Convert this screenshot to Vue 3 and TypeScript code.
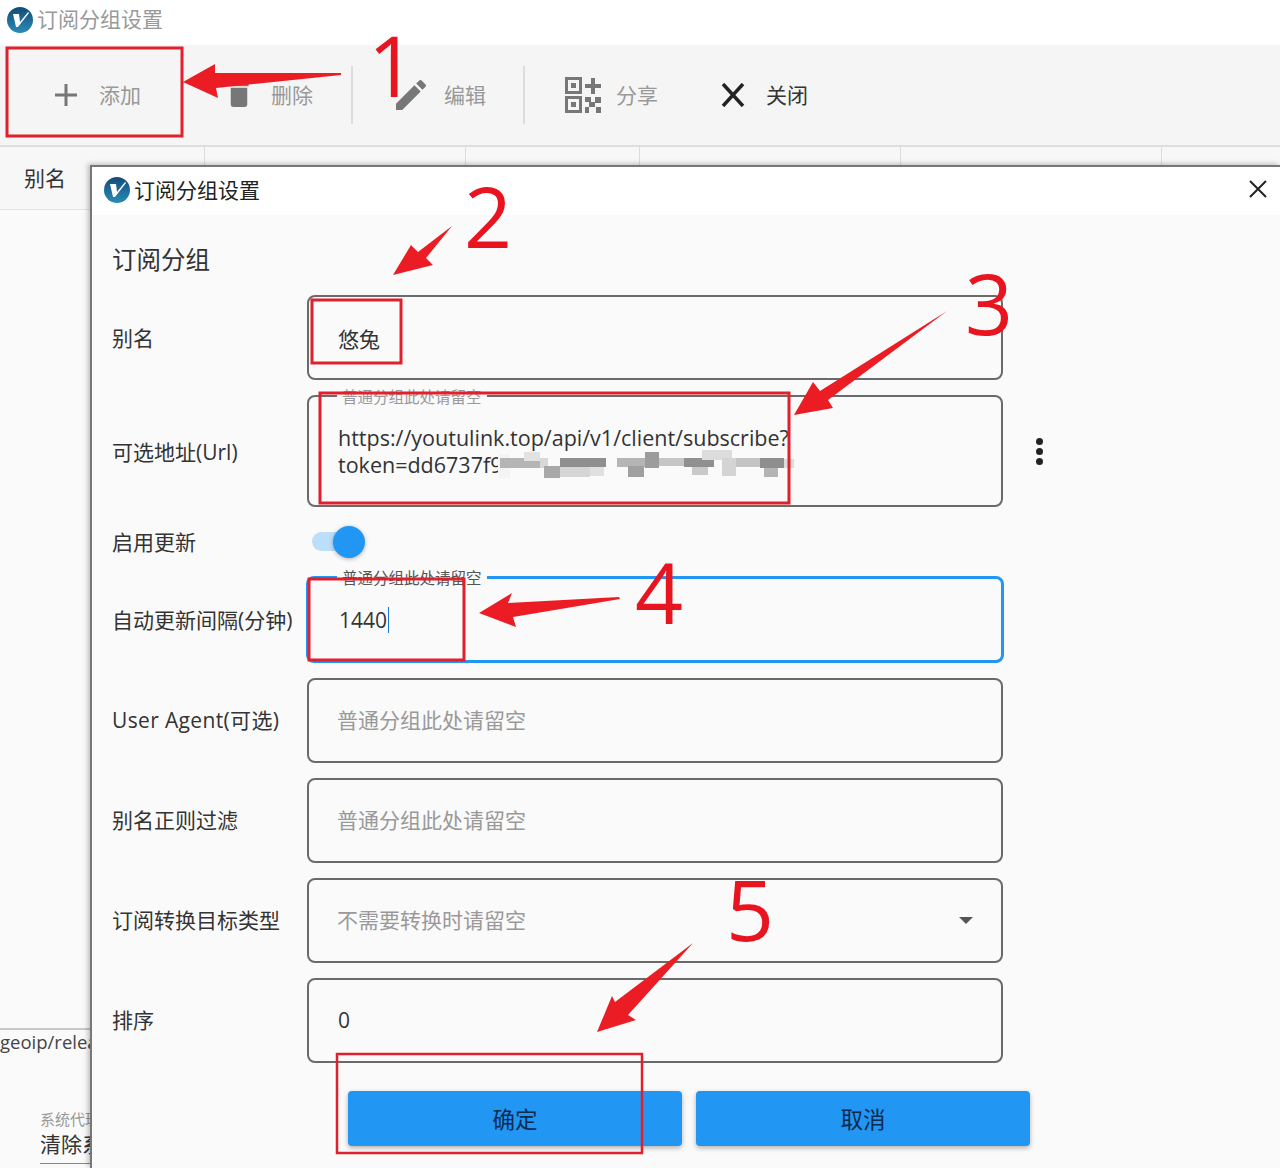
<script setup lang="ts">
interface Field {
  label: string
  value?: string
  placeholder?: string
  select?: boolean
  wide?: boolean
}

const lowerFields: Field[] = [
  { label: 'User Agent(可选)', placeholder: '普通分组此处请留空', wide: true },
  { label: '别名正则过滤', placeholder: '普通分组此处请留空' },
  { label: '订阅转换目标类型', placeholder: '不需要转换时请留空', select: true },
  { label: '排序', value: '0' }
]

const columns = [204, 465, 639, 900, 1161]

const mosaic: [number, number, number, number, string][] = [
  [498, 454, 12, 24, '#f4f4f4'],
  [500, 458, 40, 10, '#b5b5b5'], [524, 452, 16, 9, '#e2e2e2'], [540, 458, 8, 10, '#d8d8d8'],
  [544, 466, 16, 12, '#a8a8a8'], [560, 458, 46, 9, '#8f8f8f'], [560, 467, 30, 10, '#d5d5d5'],
  [590, 467, 14, 9, '#e0e0e0'], [617, 458, 28, 9, '#b5b5b5'], [628, 466, 16, 11, '#a0a0a0'],
  [645, 452, 14, 16, '#9c9c9c'], [659, 458, 25, 8, '#c6c6c6'], [684, 458, 30, 9, '#909090'],
  [692, 467, 16, 8, '#c9c9c9'], [702, 450, 30, 10, '#dcdcdc'], [722, 458, 14, 18, '#d4d4d4'],
  [736, 458, 24, 9, '#c4c4c4'], [760, 458, 24, 10, '#8e8e8e'], [764, 468, 14, 9, '#b4b4b4'],
  [784, 459, 10, 9, '#dddddd']
]

const frames = [
  { x: 7, y: 48, w: 175, h: 88 },
  { x: 312, y: 300, w: 89, h: 63 },
  { x: 320, y: 393, w: 469, h: 110 },
  { x: 309, y: 579, w: 155, h: 81 }
]

const arrows = [
  '183,82 215,64 215,73 341,73 341,75 216,88 218,98',
  '393,275 411,245 418,252 452,226 426,258 433,265',
  '794,415 813,382 820,391 947,311 828,400 833,408',
  '479,613 512,593 508,603 619,597 620,599 513,617 516,627',
  '597,1032 612,996 615,1002 693,943 628,1015 636,1020'
]

const digits = [
  { t: '1', x: 368, y: 97 },
  { t: '2', x: 464, y: 248 },
  { t: '3', x: 965, y: 335 },
  { t: '4', x: 635, y: 624 },
  { t: '5', x: 726, y: 941 }
]
</script>

<template>
  <div class="page">
    <header class="titlebar">
      <svg class="logo" viewBox="0 0 26 26">
        <defs>
          <linearGradient id="lg1" x1="0" y1="0" x2="0" y2="1">
            <stop offset="0" stop-color="#124a78" />
            <stop offset="1" stop-color="#2a8cb8" />
          </linearGradient>
        </defs>
        <circle cx="13" cy="13" r="13" fill="url(#lg1)" />
        <path d="M6 7h6l1 8 8-10 1 1-11 14H9Z" fill="#fff" />
      </svg>
      <span>订阅分组设置</span>
    </header>

    <nav class="toolbar">
      <div class="tool first">
        <svg class="icon" viewBox="0 0 24 24"><path d="M12 1v22M1 12h22" stroke="#777" stroke-width="3" fill="none" /></svg>
        <span>添加</span>
      </div>
      <div class="tool second">
        <svg class="icon" viewBox="4 3 16 18"><path d="M19 4H15.500L14.500 3H9.500L8.500 4H5V6H19M6 19A2 2 0 0 0 8 21H16A2 2 0 0 0 18 19V7H6V19Z" fill="#777" /></svg>
        <span>删除</span>
      </div>
      <i class="divider d1"></i>
      <div class="tool third">
        <svg class="icon pencil" viewBox="3 3 18 18"><path d="M20.710 7.040C21.100 6.650 21.100 6 20.710 5.630L18.370 3.290C18 2.900 17.350 2.900 16.960 3.290L15.120 5.120L18.870 8.870M3 17.250V21H6.750L17.810 9.930L14.060 6.180L3 17.250Z" fill="#777" /></svg>
        <span>编辑</span>
      </div>
      <i class="divider d2"></i>
      <div class="tool fourth">
        <svg class="icon qr" viewBox="0 0 36 36" fill="#777">
          <path d="M0 0h17v17H0zM3 3v11h11V3zM6 6h5v5H6zM0 19h17v17H0zM3 22v11h11V22zM6 25h5v5H6z" fill-rule="evenodd" />
          <path d="M26 1h4v6h6v4h-6v6h-4v-6h-6V7h6zM20 20h6v5h-6zM30 20h6v6h-6zM24 25h6v5h-6zM20 30h4v6h-4zM31 30h5v6h-5z" />
        </svg>
        <span>分享</span>
      </div>
      <div class="tool fifth">
        <svg class="icon" viewBox="0 0 24 24"><path d="M2 1l20 22M22 1L2 23" stroke="#222" stroke-width="3.500" fill="none" /></svg>
        <span>关闭</span>
      </div>
    </nav>

    <div class="table-head">
      <span class="alias">别名</span>
      <i v-for="c in columns" :key="c" class="col" :style="{ left: c + 'px' }"></i>
    </div>

    <main class="backdrop">
      <div class="log">geoip/relea</div>
      <div class="setting">
        <small>系统代理</small>
        <strong>清除系统</strong>
      </div>
    </main>

    <section class="dialog">
      <div class="dialog-title">
        <svg class="logo" viewBox="0 0 26 26">
          <circle cx="13" cy="13" r="13" fill="url(#lg1)" />
          <path d="M6 7h6l1 8 8-10 1 1-11 14H9Z" fill="#fff" />
        </svg>
        <span>订阅分组设置</span>
        <svg class="dialog-close" viewBox="0 0 18 18"><path d="M1 1l16 16M17 1L1 17" stroke="#222" stroke-width="2" fill="none" /></svg>
      </div>

      <div class="dialog-body">
        <h2>订阅分组</h2>

        <div class="row">
          <label class="up1">别名</label>
          <div class="field">悠兔</div>
        </div>

        <div class="row">
          <label>可选地址(Url)</label>
          <div class="field tall">
            <span class="float">普通分组此处请留空</span>
            <span class="url">https://youtulink.top/api/v1/client/subscribe?<br />token=dd6737f9</span>
          </div>
          <div class="kebab"><i></i><i></i><i></i></div>
        </div>

        <div class="row switch-row">
          <label class="up1">启用更新</label>
          <div class="switch"><i></i></div>
        </div>

        <div class="row">
          <label class="up1">自动更新间隔(分钟)</label>
          <div class="field focused">
            <span class="float">普通分组此处请留空</span>
            <span>1440</span><i class="caret"></i>
          </div>
        </div>

        <div v-for="f in lowerFields" :key="f.label" class="row">
          <label class="up2" :class="{ wide: f.wide }">{{ f.label }}</label>
          <div class="field lower">
            <span v-if="f.value" class="number">{{ f.value }}</span>
            <span v-else class="placeholder">{{ f.placeholder }}</span>
            <i v-if="f.select" class="chevron"></i>
          </div>
        </div>

        <div class="actions">
          <button type="button">确定</button>
          <button type="button">取消</button>
        </div>
      </div>
    </section>

    <svg class="marks" viewBox="0 0 1280 1168">
      <g class="blur">
        <rect v-for="(m, i) in mosaic" :key="i" :x="m[0]" :y="m[1]" :width="m[2]" :height="m[3]" :fill="m[4]" />
      </g>
      <rect v-for="(r, i) in frames" :key="i" :x="r.x" :y="r.y" :width="r.w" :height="r.h" fill="none" stroke="#e0202c" stroke-width="3" />
      <rect x="337" y="1054" width="305" height="99" fill="none" stroke="#e0202c" stroke-width="2.500" />
      <polygon v-for="(p, i) in arrows" :key="i" :points="p" fill="#ec1c24" />
      <text v-for="d in digits" :key="d.t" :x="d.x" :y="d.y" class="digit">{{ d.t }}</text>
    </svg>
  </div>
</template>

<style scoped>
.page {
  position: relative;
  width: 1280px;
  height: 1168px;
  overflow: hidden;
  display: flex;
  flex-direction: column;
  background: #fafafa;
  color: #333;
  font-family: "Open Sans", "Noto Sans CJK SC", sans-serif;
  font-size: 21px;
}
.titlebar {
  height: 45px;
  flex: none;
  display: flex;
  align-items: center;
  gap: 4px;
  padding: 0 0 9px 7px;
  box-sizing: border-box;
  background: #fff;
  color: #999;
}
.logo {
  width: 26px;
  height: 26px;
  flex: none;
}
.titlebar .logo { margin-top: 3px; }
.toolbar {
  height: 100px;
  flex: none;
  display: flex;
  align-items: center;
  box-sizing: border-box;
  padding-left: 54px;
  background: #f5f5f5;
  color: #999;
}
.tool {
  display: flex;
  align-items: center;
  gap: 21px;
}
.icon {
  width: 24px;
  height: 24px;
  flex: none;
}
.tool span { margin-top: -3px; }
.second { margin-left: 87px; }
.second .icon { width: 22px; height: 25px; margin-top: -1px; }
.third { margin-left: 43px; gap: 18px; }
.third .pencil { width: 30px; height: 30px; margin-top: -1px; }
.fourth { margin-left: 40px; gap: 15px; }
.fourth .qr { width: 36px; height: 36px; margin-top: -1px; }
.fifth { margin-left: 63px; color: #333; }
.divider {
  width: 2px;
  height: 58px;
  background: #dcdcdc;
}
.d1 { margin-left: 38px; }
.d2 { margin-left: 37px; }
.table-head {
  position: relative;
  height: 65px;
  flex: none;
  display: flex;
  align-items: center;
  box-sizing: border-box;
  padding: 0 0 3px 24px;
  border-top: 2px solid #dedede;
  border-bottom: 1px solid #e2e2e2;
  background: #f7f7f7;
}
.col {
  position: absolute;
  top: 0;
  bottom: 0;
  width: 1px;
  background: #dcdcdc;
}
.backdrop {
  flex: 1;
  display: flex;
  flex-direction: column;
  justify-content: flex-end;
  background: #fafafa;
}
.log {
  height: 81px;
  box-sizing: border-box;
  border-top: 2px solid #c8c8c8;
  line-height: 24px;
  font-size: 18.500px;
  color: #444;
  white-space: nowrap;
}
.setting {
  height: 59px;
  width: 200px;
  box-sizing: border-box;
  margin-left: 40px;
  display: flex;
  flex-direction: column;
}
.setting small {
  font-size: 15px;
  line-height: 20px;
  color: #999;
  white-space: nowrap;
}
.setting strong {
  font-weight: 400;
  font-size: 21px;
  line-height: 30px;
  color: #333;
  white-space: nowrap;
  border-bottom: 1px solid #888;
  padding-bottom: 4px;
}
.dialog {
  position: absolute;
  left: 90px;
  top: 165px;
  right: 0;
  bottom: 0;
  display: flex;
  flex-direction: column;
  box-sizing: border-box;
  border-top: 2px solid #777;
  border-left: 2px solid #777;
  box-shadow: -2px -1px 5px rgba(0, 0, 0, 0.25);
  background: #fafafa;
}
.dialog-title {
  height: 48px;
  flex: none;
  display: flex;
  align-items: center;
  gap: 4px;
  box-sizing: border-box;
  padding: 0 0 5px 12px;
  background: #fff;
  color: #222;
  position: relative;
}
.dialog-title .logo { margin-top: 2px; }
.dialog-close {
  position: absolute;
  right: 13px;
  top: 13px;
  width: 18px;
  height: 18px;
}
.dialog-body {
  padding-left: 20px;
}
h2 {
  margin: 0;
  height: 80px;
  display: flex;
  align-items: center;
  padding: 7px 0 0 0;
  box-sizing: border-box;
  font-weight: 400;
  font-size: 24.500px;
  color: #333;
}
.row {
  display: flex;
  align-items: center;
  margin-bottom: 15px;
}
label {
  width: 195px;
  flex: none;
  box-sizing: border-box;
  color: #333;
  white-space: nowrap;
}
.up1 { padding-bottom: 2px; }
.up2 { padding-bottom: 4px; }
.wide { letter-spacing: 0.35px; }
.field {
  position: relative;
  width: 696px;
  height: 85px;
  flex: none;
  display: flex;
  align-items: center;
  box-sizing: border-box;
  padding-left: 29px;
  border: 2px solid #6a6a6a;
  border-radius: 8px;
  color: #333;
}
.lower { padding-bottom: 3px; }
.number { padding-top: 2px; }
.tall {
  height: 112px;
  line-height: 27px;
}
.url {
  font-size: 21.500px;
  white-space: nowrap;
}
.focused {
  width: 698px;
  height: 87px;
  margin-left: -1px;
  padding-left: 29px;
  border: 3px solid #2196f3;
}
.focused span:not(.float) { margin-left: 1px; }
.float {
  position: absolute;
  left: 28px;
  top: -10px;
  padding: 0 5px;
  background: #fafafa;
  font-size: 15.500px;
  line-height: 20px;
  color: #999;
  white-space: nowrap;
}
.focused .float { color: #555; left: 28px; top: -11px; }
.placeholder { color: #999; margin-left: -1px; }
.caret {
  width: 1px;
  height: 26px;
  margin-left: 1px;
  background: #1976d2;
}
.chevron {
  position: absolute;
  right: 28px;
  top: 37px;
  border-left: 7px solid transparent;
  border-right: 7px solid transparent;
  border-top: 7px solid #555;
}
.kebab {
  margin-left: 33px;
  display: flex;
  flex-direction: column;
  gap: 3px;
}
.kebab i {
  width: 7px;
  height: 7px;
  border-radius: 50%;
  background: #222;
}
.switch-row {
  height: 39px;
}
.switch {
  position: relative;
  width: 37px;
  height: 19px;
  margin-left: 5px;
  margin-top: -1px;
  border-radius: 10px;
  background: #bbdefb;
}
.switch i {
  position: absolute;
  right: -16px;
  top: -6px;
  width: 32px;
  height: 32px;
  border-radius: 50%;
  background: #2196f3;
  box-shadow: 0 1px 4px rgba(0, 0, 0, 0.3);
}
.actions {
  display: flex;
  gap: 14px;
  margin: 28px 0 0 236px;
}
button {
  width: 334px;
  height: 55px;
  border: 0;
  border-radius: 4px;
  background: #2196f3;
  color: #0c2a4d;
  font: inherit;
  font-size: 22.500px;
  box-shadow: 0 2px 5px rgba(0, 0, 0, 0.3);
}
.marks {
  position: absolute;
  inset: 0;
  width: 1280px;
  height: 1168px;
  pointer-events: none;
}
.blur {
  filter: blur(0.7px);
}
.digit {
  font-family: "Open Sans", sans-serif;
  font-size: 84px;
  fill: #e8141f;
}
</style>
